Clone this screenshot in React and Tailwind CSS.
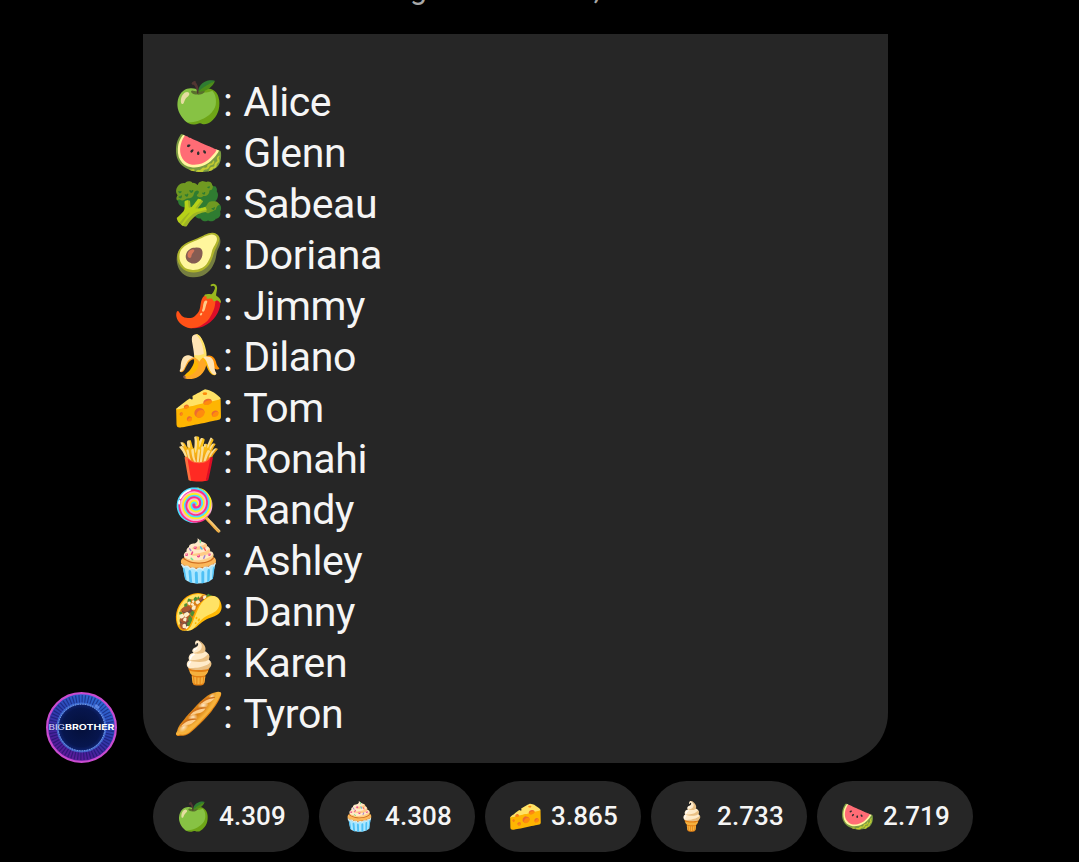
const contestants = [
  { emoji: '🍏', name: 'Alice' },
  { emoji: '🍉', name: 'Glenn' },
  { emoji: '🥦', name: 'Sabeau' },
  { emoji: '🥑', name: 'Doriana' },
  { emoji: '🌶️', name: 'Jimmy' },
  { emoji: '🍌', name: 'Dilano' },
  { emoji: '🧀', name: 'Tom' },
  { emoji: '🍟', name: 'Ronahi' },
  { emoji: '🍭', name: 'Randy' },
  { emoji: '🧁', name: 'Ashley' },
  { emoji: '🌮', name: 'Danny' },
  { emoji: '🍦', name: 'Karen' },
  { emoji: '🥖', name: 'Tyron' },
];

const reactions = [
  { emoji: '🍏', count: '4.309' },
  { emoji: '🧁', count: '4.308' },
  { emoji: '🧀', count: '3.865' },
  { emoji: '🍦', count: '2.733' },
  { emoji: '🍉', count: '2.719' },
];

const Avatar = () => (
  <svg viewBox="0 0 71 71" className="mr-[26px] h-[71px] w-[71px] shrink-0">
    <defs>
      <linearGradient id="base" x1="0.7" y1="0" x2="0.2" y2="1">
        <stop offset="0" stopColor="#2f6fd8" />
        <stop offset="0.45" stopColor="#2c3cae" />
        <stop offset="0.75" stopColor="#4a1f9a" />
        <stop offset="1" stopColor="#6a1a9a" />
      </linearGradient>
      <radialGradient id="eye">
        <stop offset="0" stopColor="#04103a" />
        <stop offset="0.8" stopColor="#07164e" />
        <stop offset="1" stopColor="#102474" />
      </radialGradient>
    </defs>
    <circle cx="35.5" cy="35.5" r="34.4" fill="url(#base)" stroke="#c94bd0" strokeWidth="2.2" />
    {/* dark spokes around the eye */}
    <circle cx="35.5" cy="35.5" r="28" fill="none" stroke="#0c1258" strokeOpacity="0.5" strokeWidth="9" strokeDasharray="1.1 1.83" />
    <circle cx="35.5" cy="35.5" r="24" fill="url(#eye)" />
    <circle cx="35.5" cy="35.5" r="24" fill="none" stroke="#4b7fe6" strokeOpacity="0.7" strokeWidth="2" />
    <circle cx="35.5" cy="35.5" r="23.3" fill="none" stroke="#a4cbff" strokeOpacity="0.7" strokeWidth="1" strokeDasharray="1.2 1.3" />
    <ellipse cx="51" cy="14.5" rx="3" ry="1.4" transform="rotate(35 51 14.5)" fill="#7fa8ff" fillOpacity="0.6" />
    <text x="2.5" y="38.3" fill="#d4daff" fontSize="7" fontFamily="Inter, sans-serif" textLength="16.5" lengthAdjust="spacingAndGlyphs">BIG</text>
    <text x="19" y="38.3" fill="#fff" fontSize="7" fontWeight="700" fontFamily="Inter, sans-serif" textLength="49.4" lengthAdjust="spacingAndGlyphs">BROTHER</text>
  </svg>
);

const App = () => {
  return (
    <div className="h-[862px] w-[1079px] overflow-hidden bg-black font-['Roboto',sans-serif] text-[#f5f5f5]">
      {/* previous line, scrolled almost out of view */}
      <div className="flex h-[34px] gap-[167px] pl-[410px] text-[30px] leading-[30px] text-[#a8a8a8]">
        <span className="-mt-[26px]">g</span>
        <span className="-mt-[26px]">,</span>
      </div>
      <div className="flex items-end pl-[46px]">
        <Avatar />
        <div className="h-[729px] w-[745px] rounded-b-[50px] bg-[#262626] pl-[30px] pt-[43px]">
          {contestants.map((c) => (
            <div key={c.name} className="flex h-[51px] items-center text-[41px] leading-[51px]">
              <span className="w-[50px]">{c.emoji}</span>
              <span className="tracking-[-0.4px]">:</span>
              <span className="ml-[10.7px] tracking-[-0.4px]">{c.name}</span>
            </div>
          ))}
        </div>
      </div>
      <div className="mt-[18px] flex gap-2.5 pl-[153px]">
        {reactions.map((r) => (
          <div key={r.emoji} className="flex h-[71px] w-[156px] items-center rounded-full bg-[#262626] pl-[23px] text-[26px] font-medium">
            <span className="w-[43px] text-[28px]">{r.emoji}</span>
            <span className="tracking-[0.1px]">{r.count}</span>
          </div>
        ))}
      </div>
    </div>
  );
};

export default App;
